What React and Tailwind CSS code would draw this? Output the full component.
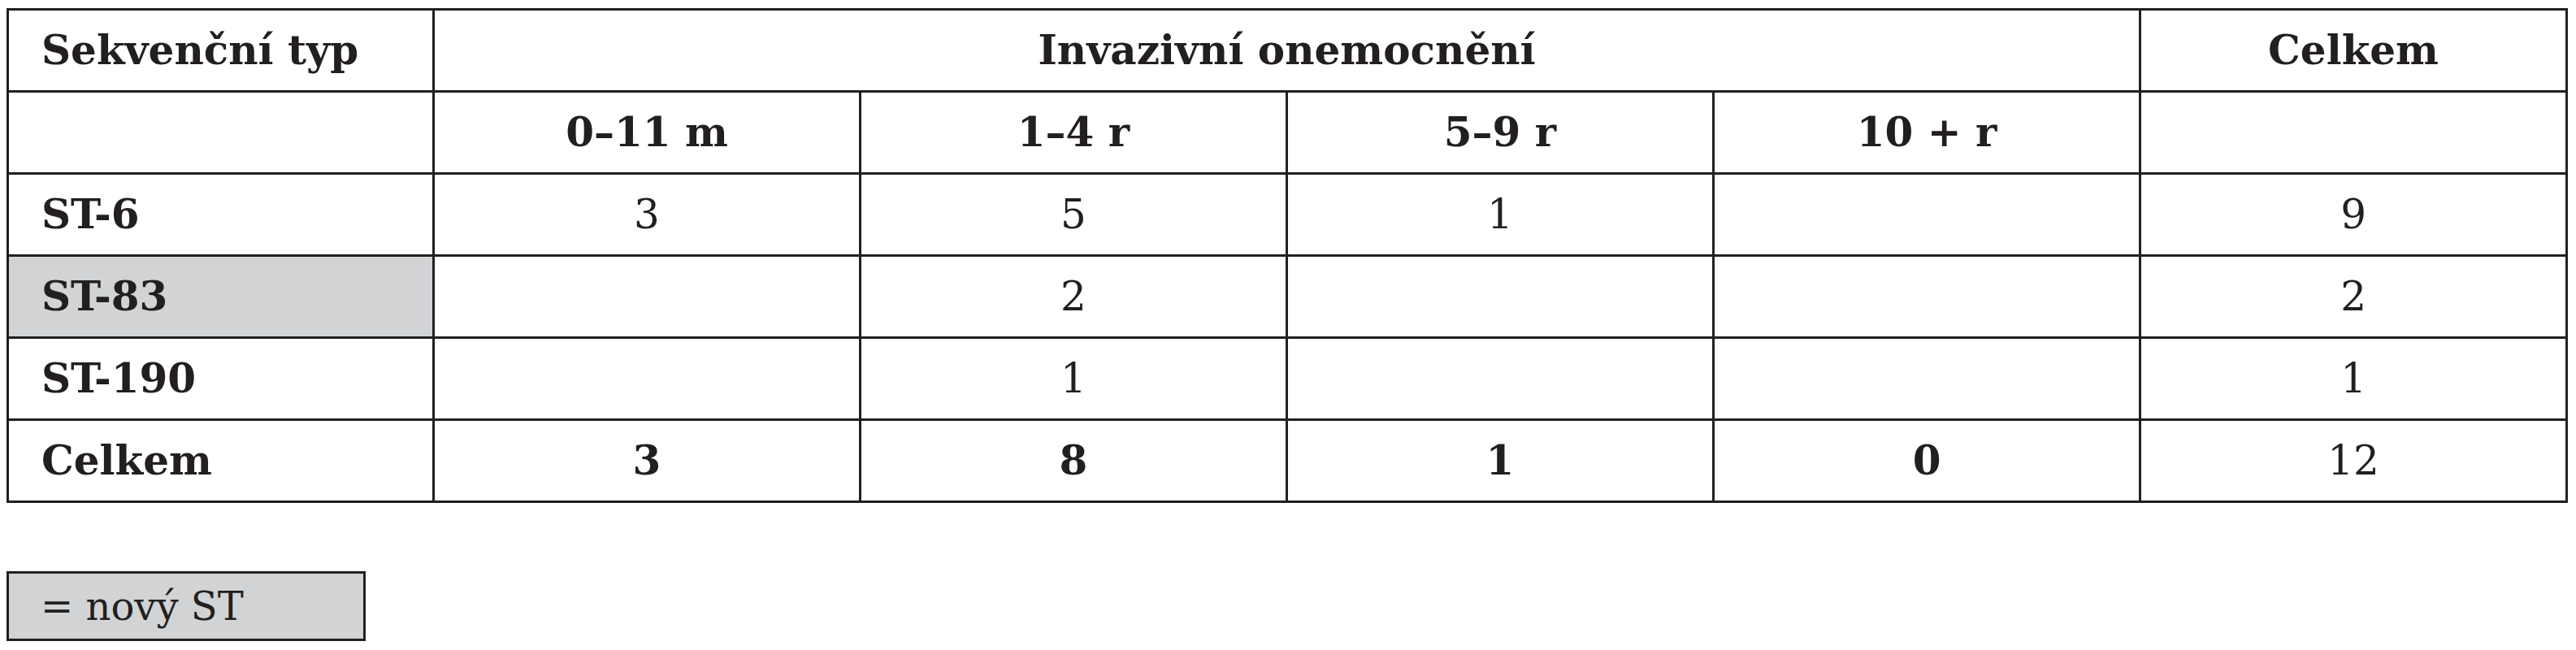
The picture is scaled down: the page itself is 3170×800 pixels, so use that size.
import React from "react";

const cell = "border-[3px] border-[#231f20] h-[101px] p-0 align-middle";

export default function App() {
  const rows = [
    { name: "ST-6", vals: ["3", "5", "1", "", "9"], gray: false },
    { name: "ST-83", vals: ["", "2", "", "", "2"], gray: true },
    { name: "ST-190", vals: ["", "1", "", "", "1"], gray: false },
  ];
  return (
    <div
      className="w-[3170px] h-[800px] bg-white text-[#231f20] pl-[8px] pt-[10px]"
      style={{ fontFamily: '"DejaVu Serif", "Liberation Serif", serif' }}
    >
      <table className="table-fixed border-collapse w-[3149px] text-[50px] leading-none">
        <colgroup>
          <col className="w-[524px]" />
          <col className="w-[525px]" />
          <col className="w-[525px]" />
          <col className="w-[525px]" />
          <col className="w-[525px]" />
          <col className="w-[525px]" />
        </colgroup>
        <tbody>
          <tr>
            <td className={`${cell} text-left pl-[40px] font-bold`}>Sekvenční typ</td>
            <td className={`${cell} text-center font-bold`} colSpan={4}>
              Invazivní onemocnění
            </td>
            <td className={`${cell} text-center font-bold`}>Celkem</td>
          </tr>
          <tr>
            <td className={cell}></td>
            <td className={`${cell} text-center font-bold`}>0–11 m</td>
            <td className={`${cell} text-center font-bold`}>1–4 r</td>
            <td className={`${cell} text-center font-bold`}>5–9 r</td>
            <td className={`${cell} text-center font-bold`}>10 + r</td>
            <td className={cell}></td>
          </tr>
          {rows.map((r) => (
            <tr key={r.name}>
              <td
                className={`${cell} text-left pl-[40px] font-bold ${
                  r.gray ? "bg-[#d1d3d5]" : ""
                }`}
              >
                {r.name}
              </td>
              {r.vals.map((v, i) => (
                <td key={i} className={`${cell} text-center`}>
                  {v}
                </td>
              ))}
            </tr>
          ))}
          <tr>
            <td className={`${cell} text-left pl-[40px] font-bold`}>Celkem</td>
            <td className={`${cell} text-center font-bold`}>3</td>
            <td className={`${cell} text-center font-bold`}>8</td>
            <td className={`${cell} text-center font-bold`}>1</td>
            <td className={`${cell} text-center font-bold`}>0</td>
            <td className={`${cell} text-center`}>12</td>
          </tr>
        </tbody>
      </table>
      <div className="mt-[84px] w-[442px] h-[86px] border-[3px] border-[#231f20] bg-[#d1d3d5] flex items-center pl-[39px] text-[48px] leading-none">
        = nový ST
      </div>
    </div>
  );
}
